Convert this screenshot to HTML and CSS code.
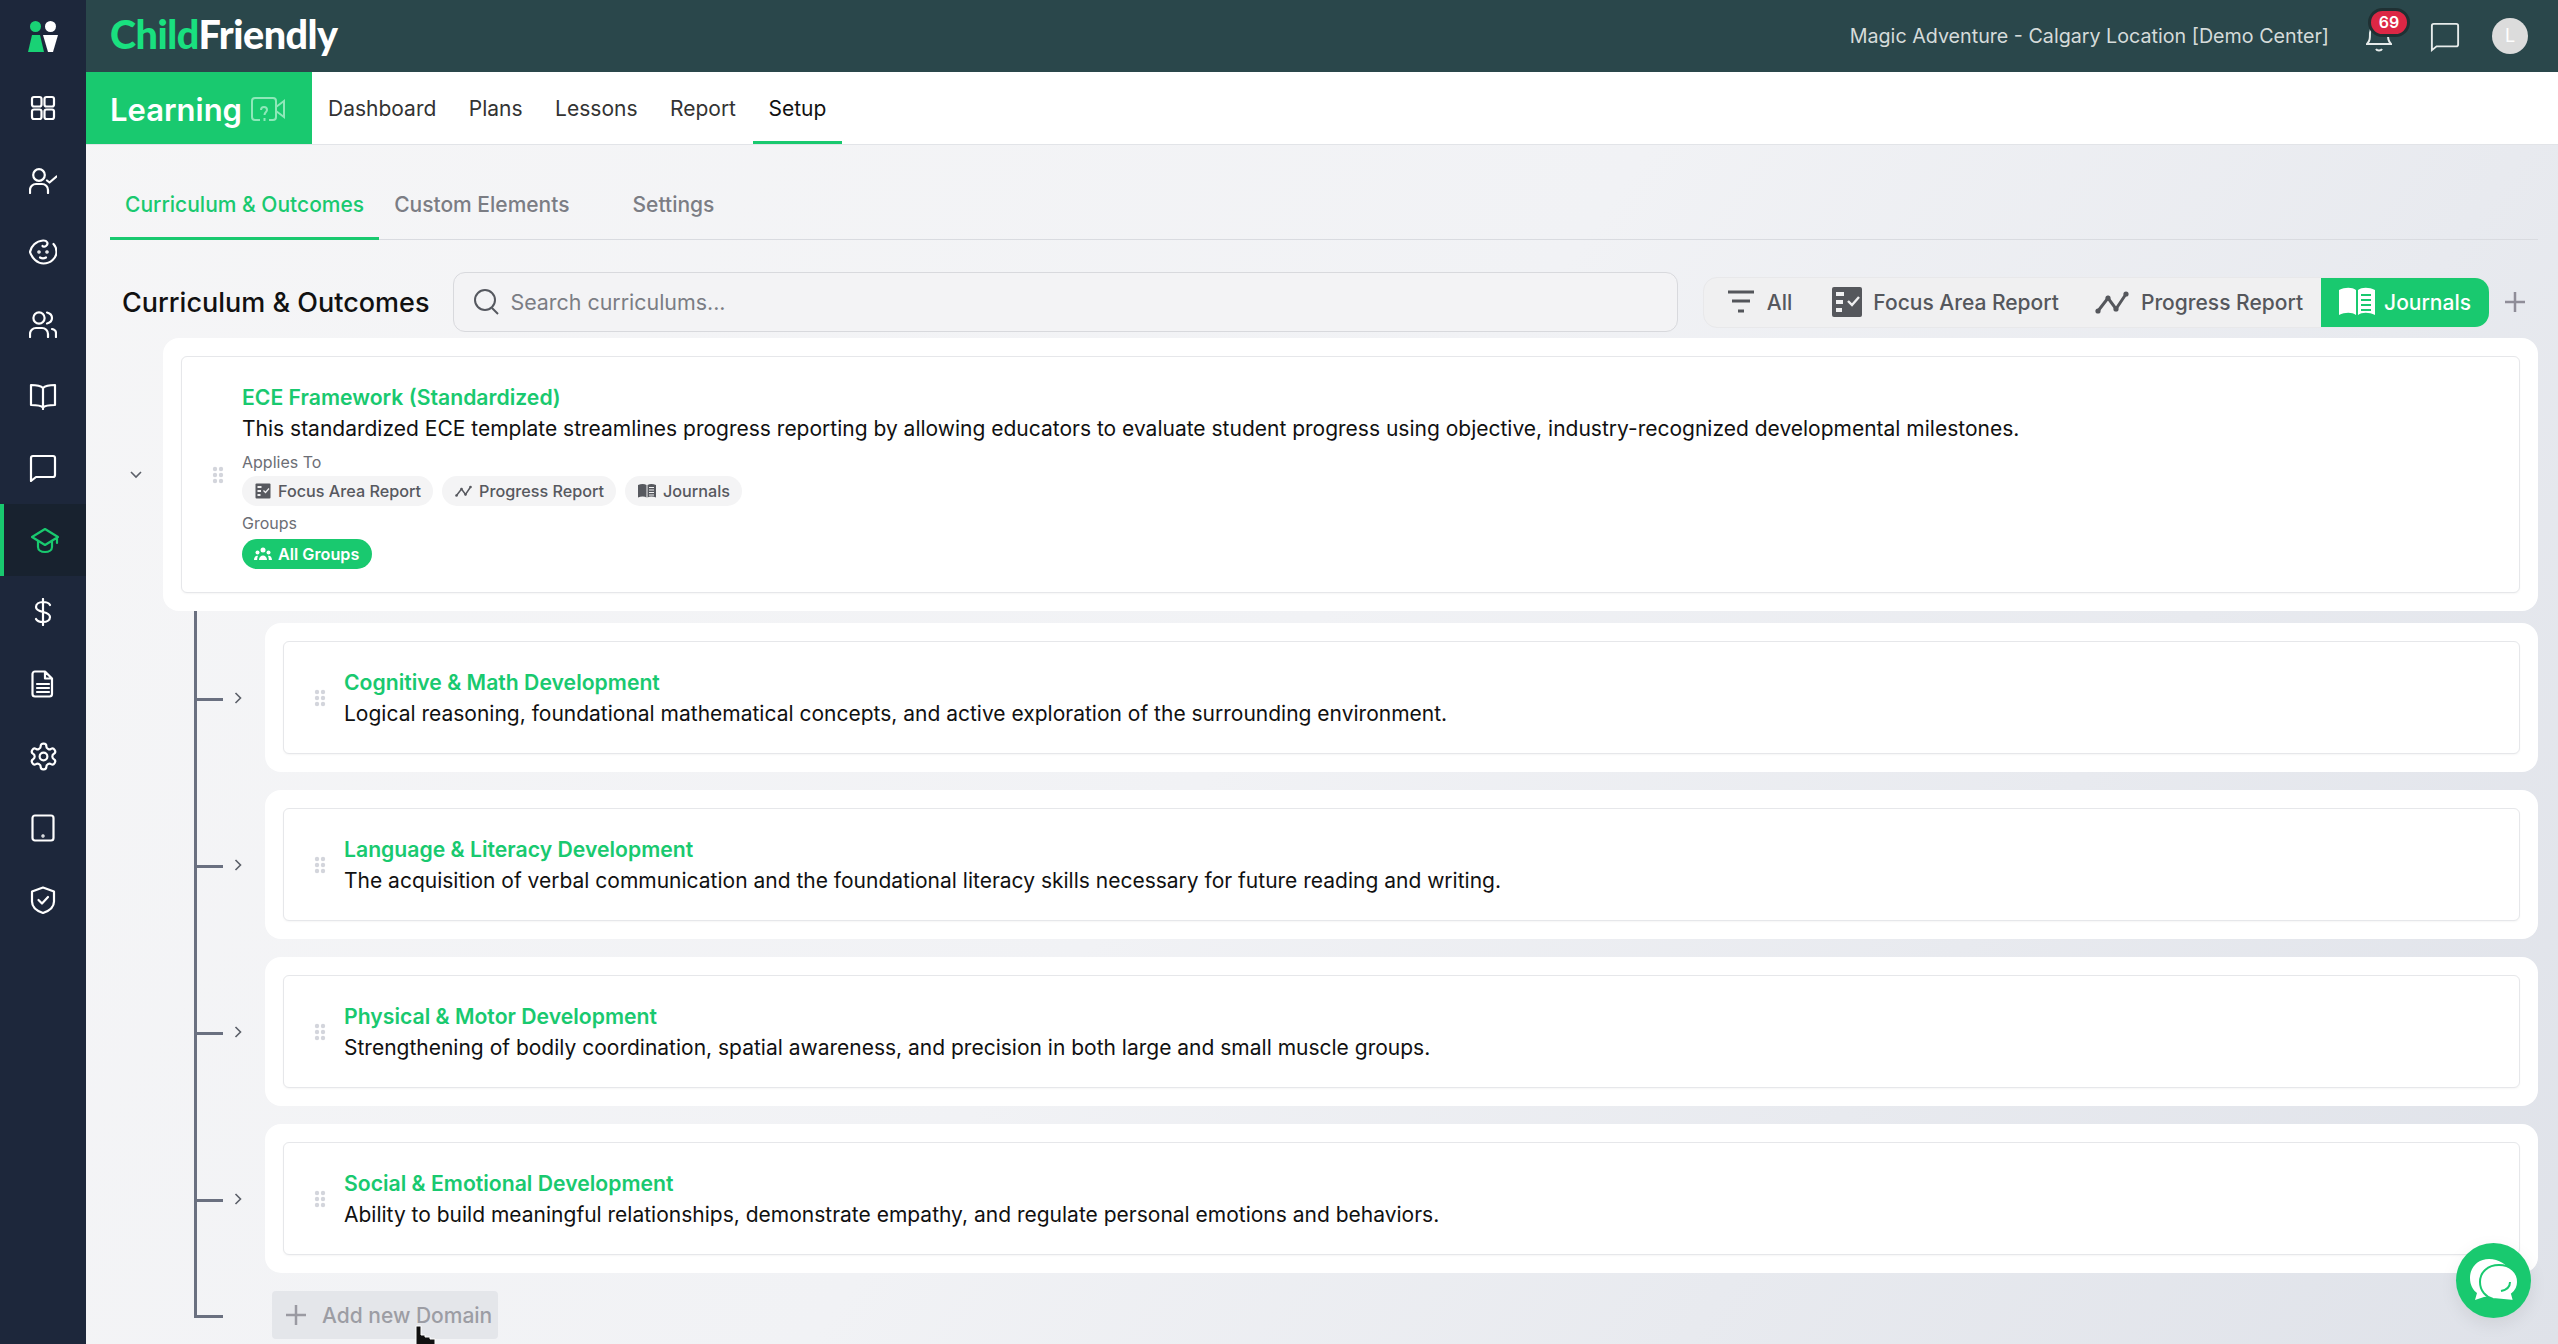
FILE: index.html
```html
<!DOCTYPE html>
<html>
  <head>
    <meta charset="utf-8">
    <title>ChildFriendly Learning Setup</title>
    <link rel="stylesheet" href="styles.css">
  </head>
<body>

  <svg class="defs" width="0" height="0">
    <symbol id="grip" viewBox="0 0 12 18"><g fill="#d3d5dc"><circle cx="3" cy="3" r="2.2"/><circle cx="9" cy="3" r="2.2"/><circle cx="3" cy="9" r="2.2"/><circle cx="9" cy="9" r="2.2"/><circle cx="3" cy="15" r="2.2"/><circle cx="9" cy="15" r="2.2"/></g></symbol>
    <symbol id="chev" viewBox="0 0 10 14"><path d="M2.5 2l5 5-5 5" fill="none" stroke="#5b5f68" stroke-width="1.6"/></symbol>
    <symbol id="focus" viewBox="0 0 32 32"><rect x="1" y="1" width="30" height="30" rx="2" fill="currentColor"/><g fill="#f0f0f1"><rect x="5" y="6" width="8" height="4"/><rect x="5" y="14" width="7" height="4"/><rect x="5" y="22" width="6" height="4"/></g><path d="M17 15l4 4 7-8" fill="none" stroke="#f0f0f1" stroke-width="2.4"/></symbol>
    <symbol id="trend" viewBox="0 0 34 24"><path d="M3 21L13 8l8 11L31 4" fill="none" stroke="currentColor" stroke-width="3"/><g fill="currentColor"><circle cx="3" cy="21" r="2.6"/><circle cx="13" cy="8" r="2.6"/><circle cx="21" cy="19" r="2.6"/><circle cx="31" cy="4" r="2.6"/></g></symbol>
    <symbol id="book" viewBox="0 0 36 32"><path d="M0 4c6-3 13-3 17 0v25c-4-3-11-3-17 0zM19 4c4-3 11-3 17 0v25c-6-3-13-3-17 0z" fill="currentColor"/><path d="M22 9h10M22 14h10M22 19h10M22 24h10" stroke="var(--page)" stroke-width="2.2"/></symbol>
  </svg>

  <div class="sidebar">
    <div class="side-logo">
      <svg width="30" height="31" viewBox="0 0 30 31"><circle cx="7.500" cy="5.500" r="5.500" fill="#19d275"/><circle cx="22.500" cy="5.500" r="5.500" fill="#fff"/><path d="M4 14h8l4 17H0z" fill="#19d275"/><path d="M15 14h15l-5 17h-5z" fill="#fff"/></svg>
    </div>
    <a class="side-item"><svg viewBox="0 0 28 28"><rect x="3" y="3" width="9.500" height="9.500" rx="2"/><rect x="15.500" y="3" width="9.500" height="9.500" rx="2"/><rect x="3" y="15.500" width="9.500" height="9.500" rx="2"/><rect x="15.500" y="15.500" width="9.500" height="9.500" rx="2"/></svg></a>
    <a class="side-item"><svg viewBox="0 0 28 28"><circle cx="10" cy="9" r="5.800"/><path d="M1 27v-3a6 6 0 0 1 6-6h6a6 6 0 0 1 6 6v3"/><path d="M18 14.500l2.500 2 7-6"/></svg></a>
    <a class="side-item"><svg viewBox="0 0 28 28"><path d="M24.500 6c2 2 3 5 3 8 0 6-6 11.500-13 11.500C8 25.500 3 20 1 14c1-6 6-11 13-11.500 4-.3 6 3 3 5.500-1 .8-3 1-3.500 0"/><circle cx="10" cy="14" r=".7"/><circle cx="18" cy="14" r=".7"/><path d="M11 19.500c2 1.200 4 1.200 6 0"/></svg></a>
    <a class="side-item"><svg viewBox="0 0 28 28"><circle cx="10" cy="8" r="5.600"/><path d="M1 27v-3a6 6 0 0 1 6-6h6a6 6 0 0 1 6 6v3"/><path d="M18 2.500c4 1 5 3 5 5.500s-1 4.500-5 5.500"/><path d="M23 19c2.500 .5 4 2.500 4 4v4"/></svg></a>
    <a class="side-item"><svg viewBox="0 0 28 28"><path d="M14 6c-2-2-6-3-12-3v20c6 0 10 .5 12 2.500 2-2 6-2.500 12-2.500V3c-6 0-10 1-12 3zM14 6v21"/></svg></a>
    <a class="side-item"><svg viewBox="0 0 28 28"><path d="M2 27V4a2 2 0 0 1 2-2h20a2 2 0 0 1 2 2v17a2 2 0 0 1-2 2H7z"/></svg></a>
    <a class="side-item side-active"><svg viewBox="0 0 28 28"><path d="M14 3L1 11l13 8 13-8zM26 11v6"/><path d="M7 15v6c0 3 3 5 7 5s7-2 7-5v-6"/></svg></a>
    <a class="side-item"><svg viewBox="0 0 28 28"><path d="M14 1v26M21 7c-1-2-3-3-7-3-4 0-7 2-7 5s3 4 7 5 7 2 7 5-3 5-7 5c-4 0-6-1-7-3"/></svg></a>
    <a class="side-item"><svg viewBox="0 0 28 28"><path d="M6 1.500h10l7 7V24a2.500 2.500 0 0 1-2.500 2.500h-14.500A2.500 2.500 0 0 1 3.500 24V4A2.500 2.500 0 0 1 6 1.500zM16 1.500v7h7M8 14h12M8 18h12M8 22h12"/></svg></a>
    <a class="side-item"><svg viewBox="0 0 24 24" class="thin"><path d="M12.220 2h-.44a2 2 0 0 0-2 2v.18a2 2 0 0 1-1 1.730l-.43.25a2 2 0 0 1-2 0l-.15-.08a2 2 0 0 0-2.730.73l-.22.38a2 2 0 0 0 .73 2.730l.15.1a2 2 0 0 1 1 1.720v.51a2 2 0 0 1-1 1.740l-.15.09a2 2 0 0 0-.73 2.730l.22.38a2 2 0 0 0 2.730.73l.15-.08a2 2 0 0 1 2 0l.43.25a2 2 0 0 1 1 1.730V20a2 2 0 0 0 2 2h.44a2 2 0 0 0 2-2v-.18a2 2 0 0 1 1-1.730l.43-.25a2 2 0 0 1 2 0l.15.08a2 2 0 0 0 2.730-.73l.22-.39a2 2 0 0 0-.73-2.730l-.15-.08a2 2 0 0 1-1-1.740v-.5a2 2 0 0 1 1-1.740l.15-.09a2 2 0 0 0 .73-2.730l-.22-.38a2 2 0 0 0-2.730-.73l-.15.08a2 2 0 0 1-2 0l-.43-.25a2 2 0 0 1-1-1.730V4a2 2 0 0 0-2-2z"/><circle cx="12" cy="12" r="3"/></svg></a>
    <a class="side-item"><svg viewBox="0 0 28 28"><rect x="3.500" y="1.500" width="21" height="25" rx="2.500"/><circle cx="14" cy="22" r=".6"/></svg></a>
    <a class="side-item"><svg viewBox="0 0 28 28"><path d="M14 1.500l11 4v10c0 6-5 9.500-11 11.500-6-2-11-5.500-11-11.500v-10z"/><path d="M9.500 14l3.500 3.500 6-6.500"/></svg></a>
  </div>

  <div class="main">
    <div class="topbar">
      <div class="brand"><span class="brand-a">Child</span>Friendly</div>
      <div class="center-name">Magic Adventure - Calgary Location [Demo Center]</div>
      <div class="bell">
        <svg width="26" height="32" viewBox="0 0 26 32" fill="none" stroke="#e6ebea" stroke-width="2"><path d="M1 24c3-3 3-6 3-11 0-5 4-9 9-9s9 4 9 9c0 5 0 8 3 11zM10 29c1 2 5 2 6 0"/></svg>
        <span class="badge">69</span>
      </div>
      <svg class="top-chat" width="30" height="30" viewBox="0 0 32 32" fill="none" stroke="#e6ebea" stroke-width="2"><path d="M2 30V4a2 2 0 0 1 2-2h24a2 2 0 0 1 2 2v20a2 2 0 0 1-2 2H7z"/></svg>
      <div class="avatar">L</div>
    </div>

    <div class="subnav">
      <div class="module">Learning
        <svg width="34" height="26" viewBox="0 0 34 26" fill="none" stroke="#8ee8b9" stroke-width="2"><path d="M9 23H4a3 3 0 0 1-3-3V4a3 3 0 0 1 3-3h18a3 3 0 0 1 3 3v16a3 3 0 0 1-3 3h-4"/><path d="M25 10l8-6v16l-8-6M10 13c0-4 6-4 6 0 0 2-2.500 2-2.500 5M13.500 21v3"/></svg>
      </div>
      <a class="nav-link">Dashboard</a>
      <a class="nav-link">Plans</a>
      <a class="nav-link">Lessons</a>
      <a class="nav-link">Report</a>
      <a class="nav-link nav-active">Setup</a>
    </div>

    <div class="content">
      <div class="tabs">
        <a class="tab tab-active">Curriculum &amp; Outcomes</a>
        <a class="tab">Custom Elements</a>
        <a class="tab tab-last">Settings</a>
      </div>

      <div class="toolbar">
        <h1>Curriculum &amp; Outcomes</h1>
        <div class="search">
          <svg width="28" height="28" viewBox="0 0 28 28" fill="none" stroke="#55585f" stroke-width="2"><circle cx="13" cy="12" r="10"/><path d="M20 20l6 6"/></svg>
          <span>Search curriculums...</span>
        </div>
        <div class="filters">
          <a class="filter filter-all">
            <svg width="28" height="26" viewBox="0 0 28 26" fill="none" stroke="#54565b" stroke-width="3"><path d="M1 3h26M5 12h18M11 22h6"/></svg>
            All
          </a>
          <a class="filter filter-focus"><svg width="32" height="32"><use href="#focus"/></svg>Focus Area Report</a>
          <a class="filter"><svg width="34" height="24"><use href="#trend"/></svg>Progress Report</a>
          <a class="filter filter-on"><svg width="36" height="32"><use href="#book"/></svg>Journals</a>
        </div>
        <svg class="add-filter" width="22" height="22" viewBox="0 0 22 22" stroke="#8f8d98" stroke-width="2.500"><path d="M11 1v20M1 11h20"/></svg>
      </div>

      <div class="tree">
        <div class="root-row">
          <svg class="chev-down" width="14" height="10" viewBox="0 0 14 10"><path d="M2 2l5 5 5-5" fill="none" stroke="#5b5f68" stroke-width="1.600"/></svg>
          <div class="outer">
            <div class="card card-root">
              <svg class="grip" width="12" height="18"><use href="#grip"/></svg>
              <div class="card-body">
                <div class="card-title">ECE Framework (Standardized)</div>
                <div class="card-desc">This standardized ECE template streamlines progress reporting by allowing educators to evaluate student progress using objective, industry-recognized developmental milestones.</div>
                <div class="meta-label">Applies To</div>
                <div class="chips">
                  <span class="chip"><svg width="16" height="16"><use href="#focus"/></svg>Focus Area Report</span>
                  <span class="chip"><svg width="17" height="12"><use href="#trend"/></svg>Progress Report</span>
                  <span class="chip"><svg width="18" height="16"><use href="#book"/></svg>Journals</span>
                </div>
                <div class="meta-label meta-groups">Groups</div>
                <div class="chips chips-groups">
                  <span class="chip chip-green">
                    <svg width="18" height="14" viewBox="0 0 18 14" fill="#fff"><circle cx="9" cy="3" r="2.500"/><circle cx="3.500" cy="5.500" r="2"/><circle cx="14.500" cy="5.500" r="2"/><path d="M5 13c0-6 8-6 8 0zM0 13c0-4 3-5 4-4-.5 1-.8 2.500-.8 4zM18 13c0-4-3-5-4-4 .5 1 .8 2.500.8 4z"/></svg>
                    All Groups
                  </span>
                </div>
              </div>
            </div>
          </div>
        </div>

        <div class="children">
          <div class="child-row">
            <svg class="chev" width="10" height="14"><use href="#chev"/></svg>
            <div class="outer">
              <div class="card card-child">
                <svg class="grip" width="12" height="18"><use href="#grip"/></svg>
                <div class="card-body">
                  <div class="card-title">Cognitive &amp; Math Development</div>
                  <div class="card-desc">Logical reasoning, foundational mathematical concepts, and active exploration of the surrounding environment.</div>
                </div>
              </div>
            </div>
          </div>
          <div class="child-row">
            <svg class="chev" width="10" height="14"><use href="#chev"/></svg>
            <div class="outer">
              <div class="card card-child">
                <svg class="grip" width="12" height="18"><use href="#grip"/></svg>
                <div class="card-body">
                  <div class="card-title">Language &amp; Literacy Development</div>
                  <div class="card-desc">The acquisition of verbal communication and the foundational literacy skills necessary for future reading and writing.</div>
                </div>
              </div>
            </div>
          </div>
          <div class="child-row">
            <svg class="chev" width="10" height="14"><use href="#chev"/></svg>
            <div class="outer">
              <div class="card card-child">
                <svg class="grip" width="12" height="18"><use href="#grip"/></svg>
                <div class="card-body">
                  <div class="card-title">Physical &amp; Motor Development</div>
                  <div class="card-desc">Strengthening of bodily coordination, spatial awareness, and precision in both large and small muscle groups.</div>
                </div>
              </div>
            </div>
          </div>
          <div class="child-row">
            <svg class="chev" width="10" height="14"><use href="#chev"/></svg>
            <div class="outer">
              <div class="card card-child">
                <svg class="grip" width="12" height="18"><use href="#grip"/></svg>
                <div class="card-body">
                  <div class="card-title">Social &amp; Emotional Development</div>
                  <div class="card-desc">Ability to build meaningful relationships, demonstrate empathy, and regulate personal emotions and behaviors.</div>
                </div>
              </div>
            </div>
          </div>
          <div class="add-row">
            <a class="add-domain">
              <svg width="22" height="22" viewBox="0 0 22 22" stroke="#9a9aa2" stroke-width="2.500"><path d="M11 1v20M1 11h20"/></svg>
              Add new Domain
            </a>
          </div>
        </div>
      </div>
    </div>
  </div>

  <!-- cursor and chat button sit over the page -->
  <svg class="cursor" width="26" height="22" viewBox="0 0 26 22"><path d="M1 1h5v9h4v2h5v2h5v8H1z" fill="#111" stroke="#fff" stroke-width="1"/></svg>
  <div class="fab">
    <svg width="50" height="46" viewBox="0 0 50 46"><path d="M20 1C9 1 1 9 1 20c0 7 3 12 7 15l-2 7 9-3 10-1c10-2 17-9 17-19C42 9 32 1 20 1z" fill="#fff"/><path d="M30 7c-11 0-19 7-19 17 0 9 6 15 13 17l21 2-2-7c4-3 6-8 6-12 0-10-8-17-19-17z" fill="#fff" stroke="#19c96f" stroke-width="2"/><path d="M41 24c0 5-4 8-9 9" fill="none" stroke="#19c96f" stroke-width="2"/></svg>
  </div>

</body>
</html>
```

FILE: styles.css
```css
html
{
  height: 100%;
}
body
{
  display: flex;
  width: 2558px;
  height: 1344px;
  margin: 0;
  overflow: hidden;
  font-family: Inter, "Liberation Sans", sans-serif;
  color: #111;
  background: linear-gradient(125deg, #f6f6f7 0%, #f1f2f5 50%, #dfe2e9 100%);
}
a
{
  cursor: pointer;
}
.defs
{
  position: absolute;
}

/* left rail */
.sidebar
{
  flex: 0 0 86px;
  background-color: #1d273b;
}
.side-logo
{
  display: flex;
  justify-content: center;
  align-items: center;
  height: 72px;
}
.side-item
{
  display: flex;
  justify-content: center;
  align-items: center;
  height: 72px;
  box-sizing: border-box;
}
.side-item svg
{
  width: 28px;
  height: 28px;
  fill: none;
  stroke: #fff;
  stroke-width: 2.200;
  stroke-linecap: round;
  stroke-linejoin: round;
}
.side-item svg.thin
{
  width: 31px;
  height: 31px;
  stroke-width: 1.700;
}
.side-active
{
  background-color: #18222f;
  border-left: 4px solid #19c96f;
}
.side-active svg
{
  stroke: #19c96f;
}

.main
{
  flex: 1;
  min-width: 0;
  display: flex;
  flex-direction: column;
}

/* top bar */
.topbar
{
  display: flex;
  align-items: center;
  height: 72px;
  padding: 0 30px 0 24px;
  background-color: #2a474b;
}
.brand
{
  font-family: Lato, sans-serif;
  font-weight: 900;
  font-size: 39.500px;
  letter-spacing: -0.5px;
  color: #fff;
  margin-right: auto;
  margin-bottom: 6px;
}
.brand-a
{
  color: #19e07f;
}
.center-name
{
  font-size: 19.700px;
  color: #d5dbda;
}
.bell
{
  position: relative;
  width: 26px;
  height: 32px;
  margin-left: 37px;
}
.badge
{
  position: absolute;
  left: 2px;
  top: -12px;
  box-sizing: border-box;
  width: 42px;
  height: 29px;
  border: 3px solid #1f3033;
  border-radius: 15px;
  background-color: #dc2745;
  color: #fff;
  font-size: 16px;
  font-weight: 600;
  line-height: 23px;
  text-align: center;
}
.top-chat
{
  margin-left: 38px;
  margin-top: 2px;
}
.avatar
{
  width: 36px;
  height: 36px;
  margin-left: 32px;
  border-radius: 50%;
  background-color: #dcdcdc;
  color: #fff;
  font-size: 18px;
  line-height: 36px;
  text-align: center;
}

/* module bar */
.subnav
{
  display: flex;
  align-items: stretch;
  height: 73px;
  background-color: #fff;
  border-bottom: 1px solid #e2e4e8;
  box-sizing: border-box;
}
.module
{
  display: flex;
  align-items: center;
  gap: 9px;
  width: 226px;
  box-sizing: border-box;
  padding: 3px 0 0 24px;
  background-color: #19c96f;
  color: #fff;
  font-size: 31px;
  font-weight: 600;
}
.nav-link
{
  display: flex;
  align-items: center;
  padding: 3px 16px 0;
  margin-right: 0.5px;
  font-size: 21px;
  color: #333;
  border-bottom: 3px solid transparent;
}
.nav-active
{
  color: #111;
  border-bottom-color: #19c96f;
}

/* page */
.content
{
  flex: 1;
  padding: 0 20px 0 24px;
}
.tabs
{
  display: flex;
  height: 95px;
  border-bottom: 1px solid #d9dbe0;
  box-sizing: border-box;
}
.tab
{
  display: flex;
  align-items: center;
  padding: 26px 15px 0;
  margin-bottom: -1px;
  font-size: 21px;
  font-weight: 500;
  color: #7b7d84;
  border-bottom: 3px solid transparent;
}
.tab-active
{
  color: #19c96f;
  border-bottom-color: #19c96f;
}
.tab-last
{
  margin-left: 33px;
}
.toolbar
{
  display: flex;
  align-items: center;
  height: 98px;
  box-sizing: border-box;
  padding: 26px 0 0 12px;
}
h1
{
  margin: 0 24px 0 0;
  font-size: 27px;
  font-weight: 500;
  color: #111;
}
.search
{
  display: flex;
  align-items: center;
  gap: 10px;
  flex: 1;
  height: 60px;
  box-sizing: border-box;
  padding-left: 18px;
  border: 1px solid #d8d9dd;
  border-radius: 12px;
  background-color: #f3f3f5;
  font-size: 21.400px;
  color: #7b7d84;
}
.filters
{
  display: flex;
  align-items: stretch;
  height: 49px;
  margin-left: 25px;
  border: 1px solid #e8e8ea;
  border-radius: 14px;
  background-color: #f0f0f1;
}
.filter
{
  display: flex;
  align-items: center;
  gap: 12px;
  padding: 0 18px;
  font-size: 21px;
  font-weight: 500;
  color: #55575c;
}
.filter-all
{
  padding: 0 21px 0 23px;
}
.filter-focus
{
  gap: 10px;
}
.filter-on
{
  --page: #19c96f;
  gap: 9px;
  background-color: #19c96f;
  color: #fff;
  border-radius: 0 14px 14px 0;
}
.add-filter
{
  margin: 0 12px 0 14px;
}

/* curriculum tree */
.tree
{
  display: flex;
  flex-direction: column;
}
.root-row
{
  display: flex;
  align-items: center;
}
.chev-down
{
  margin-left: 19px;
  flex: 0 0 14px;
}
.outer
{
  flex: 1;
  min-width: 0;
  padding: 18px;
  background-color: #fff;
  border-radius: 16px;
}
.root-row .outer
{
  margin-left: 20px;
}
.card
{
  display: flex;
  align-items: center;
  gap: 18px;
  padding-left: 30px;
  border: 1px solid #e6e7ea;
  border-radius: 6px;
  background-color: #fff;
  box-shadow: 0 1px 2px rgba(0,0,0,0.04);
}
.card-root
{
  padding-top: 24px;
  padding-bottom: 23px;
}
.card-child
{
  height: 113px;
  box-sizing: border-box;
  padding-left: 30px;
}
.grip
{
  flex: 0 0 12px;
}
.card-title
{
  font-size: 21.200px;
  font-weight: 600;
  color: #19c96f;
  line-height: 32px;
  margin-bottom: 1px;
}
.card-desc
{
  font-size: 21px;
  line-height: 30px;
  color: #111;
}
.meta-label
{
  margin-top: 6px;
  font-size: 16px;
  line-height: 24px;
  color: #6c6e75;
}
.meta-groups
{
  margin-top: 5px;
}
.chips
{
  --page: #f4f4f5;
  display: flex;
  gap: 9px;
  margin-top: 2px;
}
.chips-groups
{
  margin-top: 4px;
}
.chip
{
  display: flex;
  align-items: center;
  gap: 7px;
  height: 30px;
  padding: 0 12px 0 13px;
  border-radius: 15px;
  background-color: #f4f4f5;
  font-size: 16.200px;
  font-weight: 500;
  color: #57595f;
}
.chip-green
{
  gap: 6px;
  padding: 0 13px 0 12px;
  background-color: #19c96f;
  color: #fff;
  font-weight: 600;
}
.children
{
  position: relative;
  margin: 12px 0 0 84px;
  display: flex;
  flex-direction: column;
  gap: 18px;
}
/* trunk of the tree */
.children::before
{
  content: "";
  position: absolute;
  left: 0;
  top: -12px;
  height: 704px;
  width: 3px;
  background-color: #6a7080;
}
.child-row
{
  position: relative;
  display: flex;
  align-items: center;
  height: 149px;
  padding-left: 39px;
}
.child-row::before
{
  content: "";
  position: absolute;
  left: 0;
  top: 50%;
  width: 29px;
  height: 3px;
  background-color: #6a7080;
}
.chev
{
  flex: 0 0 10px;
  margin-right: 22px;
}
.add-row
{
  position: relative;
}
.add-row::before
{
  content: "";
  position: absolute;
  left: 0;
  top: 24px;
  width: 29px;
  height: 3px;
  background-color: #6a7080;
}
.add-domain
{
  display: flex;
  align-items: center;
  gap: 15px;
  width: 226px;
  height: 48px;
  margin-left: 78px;
  box-sizing: border-box;
  padding-left: 13px;
  border-radius: 4px;
  background-color: #e4e6ea;
  font-size: 21px;
  font-weight: 500;
  color: #9c9da4;
  white-space: nowrap;
}

/* overlays */
.cursor
{
  position: absolute;
  left: 415px;
  top: 1325px;
}
.fab
{
  position: absolute;
  left: 2456px;
  top: 1243px;
  display: flex;
  justify-content: center;
  align-items: center;
  width: 75px;
  height: 75px;
  border-radius: 50%;
  background-color: #19c96f;
  box-shadow: 0 6px 18px rgba(0,0,0,0.08);
}
```
